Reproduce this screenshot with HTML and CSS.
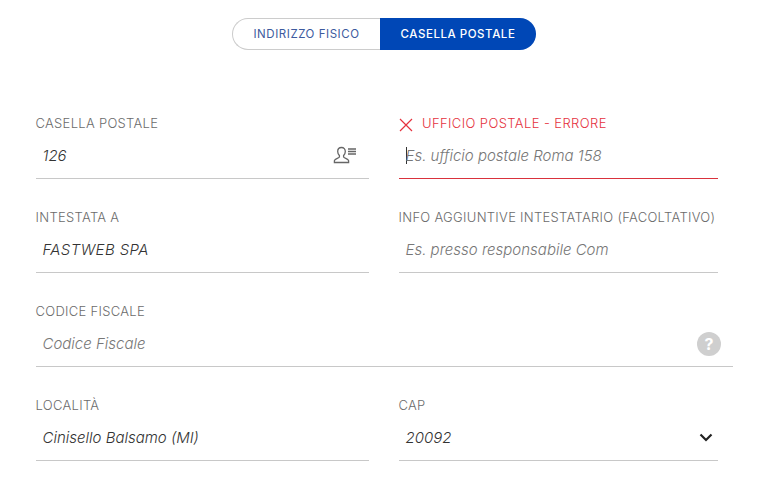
FILE: index.html
```html
<!DOCTYPE html>
<html lang="it">
<head>
  <meta charset="UTF-8">
  <title>Casella postale</title>
  <link rel="stylesheet" href="styles.css">
</head>
<body>
  <div class="switch">
    <div class="switch-option">INDIRIZZO FISICO</div>
    <div class="switch-option active">CASELLA POSTALE</div>
  </div>
  <form class="address-form">
    <div class="row">
      <div class="field col-left">
        <div class="label">CASELLA POSTALE</div>
        <div class="control">
          <span class="value">126</span>
          <svg class="icon-contact" width="24" height="18" viewBox="0 0 24 18" fill="none" stroke="#666" stroke-width="1.300">
            <path d="M8.500 1.500c-2.400 0-3.800 1.800-3.800 4 0 1.700.7 3 1.700 4v1.500c-.6 1.300-4.400 1.700-5 3.600v1.900h14.200v-1.900c-.6-1.900-4.400-2.300-5-3.600v-1.500c1-1 1.700-2.300 1.700-4 0-2.200-1.400-4-3.800-4z"/>
            <path d="M15 3h8M15 5.500h8M15 8h8" stroke-width="1.600"/>
          </svg>
        </div>
      </div>
      <div class="field col-right error">
        <div class="label">
          <svg class="icon-error" width="14" height="14" viewBox="0 0 14 14" fill="none" stroke="#e5323e" stroke-width="1.200">
            <path d="M1 1l12 12M13 1L1 13"/>
          </svg>
          UFFICIO POSTALE - ERRORE
        </div>
        <div class="control">
          <span class="caret"></span>
          <span class="placeholder">Es. ufficio postale Roma 158</span>
        </div>
      </div>
    </div>
    <div class="row">
      <div class="field col-left">
        <div class="label">INTESTATA A</div>
        <div class="control"><span class="value wide">FASTWEB SPA</span></div>
      </div>
      <div class="field col-right">
        <div class="label">INFO AGGIUNTIVE INTESTATARIO (FACOLTATIVO)</div>
        <div class="control"><span class="placeholder">Es. presso responsabile Com</span></div>
      </div>
    </div>
    <div class="row">
      <div class="field col-full">
        <div class="label">CODICE FISCALE</div>
        <div class="control">
          <span class="placeholder">Codice Fiscale</span>
          <span class="help">?</span>
        </div>
      </div>
    </div>
    <div class="row">
      <div class="field col-left">
        <div class="label">LOCALITÀ</div>
        <div class="control"><span class="value">Cinisello Balsamo (MI)</span></div>
      </div>
      <div class="field col-right">
        <div class="label">CAP</div>
        <div class="control">
          <span class="value">20092</span>
          <svg class="icon-chevron" width="14" height="9" viewBox="0 0 14 9" fill="none" stroke="#222" stroke-width="2.200">
            <path d="M1.500 1.500L7 7l5.500-5.500"/>
          </svg>
        </div>
      </div>
    </div>
  </form>
</body>
</html>
```

FILE: styles.css
```css
body {
  margin: 0;
  background: #fff;
  font-family: Inter, "Noto Sans", sans-serif;
  overflow: hidden;
}
.switch {
  display: flex;
  height: 32px;
  margin: 18px 0 0 232px;
}
.switch-option {
  display: flex;
  align-items: center;
  justify-content: center;
  box-sizing: border-box;
  width: 148px;
  border: 1px solid #ccc;
  border-right: none;
  border-radius: 16px 0 0 16px;
  color: #3d5a9e;
  font-size: 11.500px;
  letter-spacing: 0.55px;
}
.switch-option.active {
  width: 156px;
  border: none;
  border-radius: 0 16px 16px 0;
  background: #0047b6;
  color: #fff;
  font-weight: 500;
}
.address-form {
  margin: 64px 0 0 36px;
}
.row {
  display: flex;
  gap: 30px;
}
.field {
  height: 94px;
}
.col-left {
  width: 333px;
}
.col-right {
  width: 319px;
}
.col-full {
  width: 697px;
}
.label {
  display: flex;
  align-items: center;
  gap: 9px;
  height: 18px;
  margin-left: -0.500px;
  color: #6b6b6b;
  font-size: 13px;
  font-weight: 300;
  letter-spacing: 0.3px;
}
.control {
  display: flex;
  align-items: center;
  justify-content: space-between;
  box-sizing: border-box;
  height: 47px;
  padding: 1px 12px 0 6.500px;
  border-bottom: 1px solid #c8c8c8;
  font-size: 15px;
  font-style: italic;
  font-weight: 300;
}
.value {
  color: #333;
}
.placeholder {
  flex: 1;
  color: #777;
}
.wide {
  letter-spacing: 0.4px;
}
.error .label {
  margin-left: 0;
  color: #e5323e;
  letter-spacing: 0.4px;
}
.error .control {
  justify-content: flex-start;
  border-bottom-color: #d9323c;
}
.caret {
  width: 1px;
  height: 17px;
  margin-right: -1px;
  background: #333;
}
.help {
  flex: none;
  width: 24px;
  height: 24px;
  border-radius: 50%;
  background: #cfcfcf;
  color: #fff;
  font-size: 16px;
  font-style: normal;
  font-weight: 700;
  line-height: 24px;
  text-align: center;
}
.icon-contact {
  flex: none;
  margin-top: -2px;
}
.icon-chevron {
  flex: none;
  margin-right: -7px;
}
.icon-error {
  flex: none;
  margin-top: 3px;
}
```
